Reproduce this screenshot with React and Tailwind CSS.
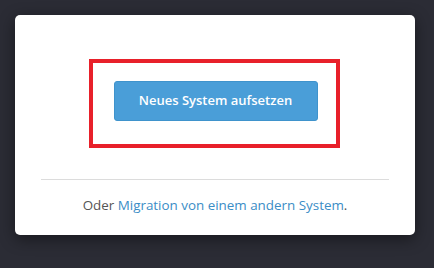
export default function App() {
  return (
    <div className="min-h-screen bg-[#2b2c35] p-[15px] font-['Open_Sans',sans-serif]">
      <div className="w-[400px] rounded-[5px] bg-white px-[26px] pb-[20px] pt-[44px] shadow-[0_4px_16px_rgba(0,0,0,0.45)]">
        <div className="mx-auto flex h-[89px] w-[251px] -translate-x-[1px] items-start border-4 border-[#e8202a] pl-[21px] pt-[18px]">
          <button className="h-[40px] w-[204px] rounded-[3px] border border-[#3f93cc] bg-[#4a9ed8] text-[13px] font-semibold text-white">
            Neues System aufsetzen
          </button>
        </div>
        <div className="mt-[31px] border-t border-[#dcdcdc]" />
        <p className="mt-[15px] text-center text-[13.4px] leading-[20px] text-[#555]">
          Oder <a className="text-[#3a8dc6]">Migration von einem andern System</a>.
        </p>
      </div>
    </div>
  )
}
